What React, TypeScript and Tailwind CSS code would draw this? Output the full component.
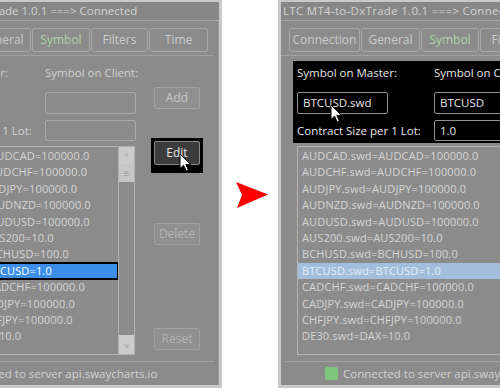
const rows = [
  'AUDCAD.swd=AUDCAD=100000.0',
  'AUDCHF.swd=AUDCHF=100000.0',
  'AUDJPY.swd=AUDJPY=100000.0',
  'AUDNZD.swd=AUDNZD=100000.0',
  'AUDUSD.swd=AUDUSD=100000.0',
  'AUS200.swd=AUS200=10.0',
  'BCHUSD.swd=BCHUSD=100.0',
  'BTCUSD.swd=BTCUSD=1.0',
  'CADCHF.swd=CADCHF=100000.0',
  'CADJPY.swd=CADJPY=100000.0',
  'CHFJPY.swd=CHFJPY=100000.0',
  'DE30.swd=DAX=10.0',
];

const tabs = [
  { name: 'Connection', w: 'w-[71px]' },
  { name: 'General', w: 'w-[59px]' },
  { name: 'Symbol', w: 'w-[58px]' },
  { name: 'Filters', w: 'w-[57px]' },
  { name: 'Time', w: 'w-[59px]' },
];

function Cursor({ className }: { className: string }) {
  return (
    <svg className={className} width="13" height="19" viewBox="0 0 13 19">
      <path d="M1 1 L1 15.5 L4.5 12.2 L7.2 18 L9.4 17 L6.8 11.4 L11.5 11.4 Z" fill="#fff" stroke="#000" strokeWidth="1" strokeLinejoin="round" />
    </svg>
  );
}

function Dialog({ after }: { after: boolean }) {
  return (
    <div className="w-[333px] h-[388px] flex flex-col border-x-[3px] border-t-2 border-b-[3px] border-[#c9c9c9] bg-[#8b8b8b] text-[#d2d2d2] font-['Open_Sans',sans-serif]">
      {/* Title */}
      <div className={`h-[19px] shrink-0 bg-[#868686] border-b border-[#a9a9a9] text-[11.5px] leading-[18px] whitespace-nowrap overflow-hidden text-[#d4d4d4] ${after ? 'pl-[2px] tracking-[0.3px]' : 'pl-[17px]'}`}>
        LTC MT4-to-DxTrade 1.0.1 ===&gt; Connected
      </div>

      {/* Body */}
      <div className="flex-1 flex flex-col border-r border-[#9c9c9c]">
        {/* Tabs */}
        <div className="mt-[7px] pl-[8px] pb-[3px] mr-[4px] flex gap-[1px] border-b border-[#a0a0a0]">
          {tabs.map(t => (
            <div
              key={t.name}
              className={`${t.w} h-[24px] shrink-0 rounded-[3px] border border-[#a7a7a7] flex items-center justify-center text-[12px] ${t.name === 'Symbol' ? 'text-[#a8d8a2]' : 'text-[#cdcdcd]'}`}
            >
              {t.name}
            </div>
          ))}
        </div>

        <div className="flex">
          {/* Left column: form + list */}
          <div className="ml-[12px] w-[237px] flex flex-col">
            <div className={`mt-[5px] h-[82px] pl-[4px] pt-[4px] text-[11.5px] ${after ? 'bg-black text-[#e6e6e6]' : ''}`}>
              <div className="flex h-[16px] leading-[16px] whitespace-nowrap">
                <div className="w-[137px]">Symbol on Master:</div>
                <div>Symbol on Client:</div>
              </div>
              <div className="flex mt-[11px] h-[22px]">
                <div className="w-[137px]">
                  <div className={`relative w-[91px] h-[22px] rounded-[2px] border pl-[5px] leading-[20px] ${after ? 'border-[#8f8f8f]' : 'invisible'}`}>
                    BTCUSD.swd
                    {after && <Cursor className="absolute left-[32px] top-[11px]" />}
                  </div>
                </div>
                <div className={`w-[91px] h-[22px] rounded-[2px] border pl-[5px] leading-[20px] ${after ? 'border-[#8f8f8f]' : 'border-[#a9a9a9]'}`}>
                  {after ? 'BTCUSD' : ''}
                </div>
              </div>
              <div className="flex mt-[6px] h-[21px] items-center">
                <div className="w-[137px] whitespace-nowrap leading-[16px]">Contract Size per 1 Lot:</div>
                <div className={`w-[91px] h-[21px] rounded-[2px] border pl-[5px] leading-[19px] ${after ? 'border-[#8f8f8f]' : 'border-[#a9a9a9]'}`}>
                  {after ? '1.0' : ''}
                </div>
              </div>
            </div>

            {/* List */}
            <div className="mt-[3px] ml-[4px] w-[227px] h-[209px] border border-[#b3b3b3] flex">
              <div className="flex-1 pt-[1px] text-[11px] tracking-[0.15px] whitespace-nowrap overflow-hidden">
                {rows.map(r => {
                  const sel = r.startsWith('BTCUSD');
                  return (
                    <div
                      key={r}
                      className={`h-[16.4px] leading-[16.4px] pl-[4px] ${
                        sel ? (after ? 'bg-[#a3bddc] text-[#e4edf7]' : 'bg-[#3b8fea] text-white outline-2 -outline-offset-1 outline-black') : 'text-[#d6d6d6]'
                      }`}
                    >
                      {r}
                    </div>
                  );
                })}
              </div>
              {/* Scrollbar */}
              <div className="w-[16px] flex flex-col border-l border-[#b3b3b3]">
                <div className="h-[17px] bg-[#cbcbcb] flex items-center justify-center text-[8px] text-[#9a9a9a]">^</div>
                <div className="h-[18px] bg-[#c6c6c6] flex items-center justify-center text-[10px] leading-none text-[#a0a0a0]">≡</div>
                <div className="flex-1" />
                <div className="h-[19px] bg-[#cbcbcb] flex items-center justify-center text-[8px] text-[#9a9a9a]">v</div>
              </div>
            </div>
          </div>

          {/* Right column: buttons */}
          <div className="ml-[13px] w-[46px] flex flex-col text-[12px]">
            <div className="mt-[31px] h-[22px] rounded-[2px] border border-[#a3a3a3] bg-[#8f8f8f] flex items-center justify-center text-[#c9c9c9]">Add</div>
            <div className={`relative mt-[29px] -mx-[3px] px-[3px] pt-[3px] pb-[8px] ${after ? '' : 'bg-black'}`}>
              <div className={`h-[24px] rounded-[2px] border flex items-center justify-center ${after ? 'border-[#a3a3a3] bg-[#8f8f8f] text-[#c9c9c9]' : 'border-[#8a8a8a] bg-[#3c3c3c] text-[#e8e8e8]'}`}>
                Edit
              </div>
              {!after && <Cursor className="absolute left-[28px] top-[15px]" />}
            </div>
            <div className="mt-[50px] h-[22px] rounded-[2px] border border-[#a0a0a0] bg-[#8f8f8f] flex items-center justify-center text-[#b4b4b4]">Delete</div>
            <div className="mt-[83px] h-[22px] rounded-[2px] border border-[#a0a0a0] bg-[#8f8f8f] flex items-center justify-center text-[#b4b4b4]">Reset</div>
          </div>
        </div>

        {/* Status */}
        <div className="mt-[6px] flex-1 border-t border-[#a3a3a3] mr-[4px] ml-[4px] flex items-center pl-[40px] text-[11.5px] whitespace-nowrap">
          <div className="w-[13px] h-[13px] shrink-0 rounded-[2px] bg-[#7cc77a] mr-[5px]" />
          <span>Connected to server api.swaycharts.io</span>
        </div>
      </div>
    </div>
  );
}

export default function App() {
  return (
    <div className="w-[500px] h-[391px] bg-white flex overflow-hidden">
      <div className="w-[222px] h-full overflow-hidden shrink-0">
        <div className="-ml-[111px]">
          <Dialog after={false} />
        </div>
      </div>
      <div className="w-[56px] shrink-0 flex items-center pl-[13px]">
        <svg width="34" height="28" viewBox="0 0 34 28">
          <polygon points="1,0 33,12.5 2,26 7,13" fill="#ff0000" />
        </svg>
      </div>
      <div className="w-[222px] h-full overflow-hidden shrink-0">
        <Dialog after={true} />
      </div>
    </div>
  );
}
